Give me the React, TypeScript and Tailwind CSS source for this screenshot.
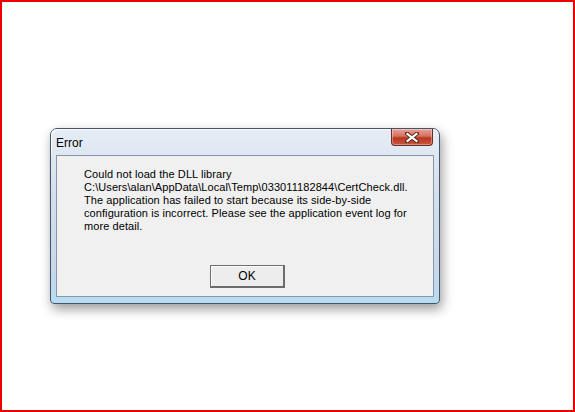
import React from 'react';

const bodyFont = { fontFamily: '"Liberation Sans", Arial, sans-serif' };

function CloseButton() {
  return (
    <div className="w-[42px] h-[17px] rounded-b-[4px] border border-[#6b2a22] border-t-0 bg-[linear-gradient(#e7a496_0%,#d6705e_45%,#b8361f_55%,#c9583e_100%)] flex items-center justify-center shadow-[inset_0_0_0_1px_rgba(255,255,255,0.35)]">
      <svg width="14" height="11" viewBox="0 0 14 11">
        <path d="M2 1.5 L12 9.5 M12 1.5 L2 9.5" stroke="#5a2a20" strokeWidth="4" strokeLinecap="square" />
        <path d="M2.5 2 L11.5 9 M11.5 2 L2.5 9" stroke="#ffffff" strokeWidth="2.2" strokeLinecap="square" />
      </svg>
    </div>
  );
}

export default function App() {
  return (
    <div className="w-[575px] h-[412px] bg-white border-2 border-[#ee0000] overflow-hidden">
      <div className="pl-[48px] pt-[126px]">
        {/* Error dialog */}
        <div className="w-[390px] h-[176px] rounded-t-[7px] rounded-b-[4px] border border-[#44546a] bg-[linear-gradient(#e5ecf5_0%,#d4dfec_40%,#c8d8ea_80%,#b6dcf2_100%)] shadow-[2px_5px_12px_rgba(0,0,0,0.4)] flex flex-col">
          <div className="h-[26px] flex items-start justify-between shadow-[inset_1px_1px_0_rgba(255,255,255,0.8)] rounded-t-[6px]">
            <div className="pl-[5px] pt-[7px] text-[12px] leading-[14px] text-black" style={bodyFont}>
              Error
            </div>
            <div className="mr-[6px]">
              <CloseButton />
            </div>
          </div>
          <div className="mx-[5px] mb-[6px] flex-1 border border-[#8796a8] bg-[#f0f0f0] flex flex-col">
            <div className="pl-[27px] pt-[12px] text-[11px] leading-[13px] tracking-[0.08px] text-black whitespace-nowrap" style={bodyFont}>
              <div>Could not load the DLL library</div>
              <div>C:\Users\alan\AppData\Local\Temp\033011182844\CertCheck.dll.</div>
              <div>The application has failed to start because its side-by-side</div>
              <div>configuration is incorrect. Please see the application event log for</div>
              <div>more detail.</div>
            </div>
            <div className="flex-1" />
            <div className="flex justify-center pl-[5px] pb-[8px]">
              <button className="w-[75px] h-[23px] border border-[#6c6c6c] border-r-2 border-b-2 bg-[#ededed] shadow-[inset_1px_1px_0_#ffffff] text-[12px] text-black" style={bodyFont}>
                OK
              </button>
            </div>
          </div>
        </div>
      </div>
    </div>
  );
}
